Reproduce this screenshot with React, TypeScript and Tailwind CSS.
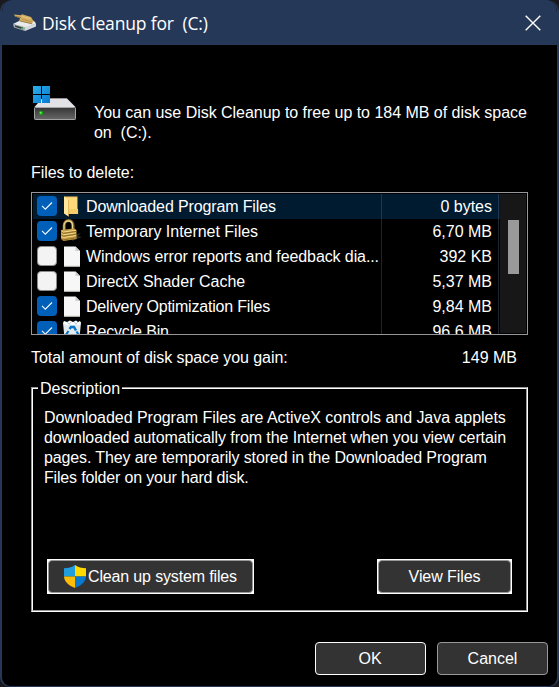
import React from "react";

type Kind = "folder" | "lock" | "page" | "bin";
type Entry = { name: string; size: string; checked: boolean; kind: Kind; tracking: string };

const entries: Entry[] = [
  { name: "Downloaded Program Files", size: "0 bytes", checked: true, kind: "folder", tracking: "tracking-[-0.13px]" },
  { name: "Temporary Internet Files", size: "6,70 MB", checked: true, kind: "lock", tracking: "tracking-[-0.02px]" },
  { name: "Windows error reports and feedback dia...", size: "392 KB", checked: false, kind: "page", tracking: "tracking-[-0.1px]" },
  { name: "DirectX Shader Cache", size: "5,37 MB", checked: false, kind: "page", tracking: "tracking-normal" },
  { name: "Delivery Optimization Files", size: "9,84 MB", checked: true, kind: "page", tracking: "tracking-[-0.2px]" },
  { name: "Recycle Bin", size: "96,6 MB", checked: true, kind: "bin", tracking: "tracking-[-0.15px]" },
];

function CleanupIcon() {
  return (
    <svg width="24" height="20" viewBox="0 0 24 20" className="shrink-0">
      <path d="M0 11 8 7 21 8 23 10.500 12 15z" fill="#e8eaec" />
      <path d="M0 11 12 14v4L1 14.500z" fill="#a9b0b5" />
      <path d="M12 14 23 10.500v3L12 18z" fill="#d5d9dc" />
      <path d="M2 12.300 10 14.500v2L2 14z" fill="#39443f" />
      <path d="M8 14.500h2v1.500H8z" fill="#35ac50" />
      <path d="M1 1.500 8 2.200 9 1.200 18 4 20.500 8 19 11 6 8 7 5 2 3.500z" fill="#d3ae61" />
      <path d="M2 3.300 8 4.500M6.500 7.800 19 10.800" stroke="#92743c" strokeWidth=".8" fill="none" />
      <path d="M9 6l10 3" stroke="#b08d4b" strokeWidth=".7" fill="none" />
      <path d="M9 3.500l8 2" stroke="#e6c981" strokeWidth="1" />
    </svg>
  );
}

function DriveIcon() {
  return (
    <svg width="44" height="36" viewBox="0 0 44 36" className="shrink-0">
      <defs>
        <linearGradient id="drive" x1="0" y1="0" x2="0" y2="1">
          <stop stopColor="#353535" />
          <stop offset="1" stopColor="#686868" />
        </linearGradient>
        <linearGradient id="tiles" x1="0" y1="0" x2="1" y2="1">
          <stop stopColor="#2bb0ea" />
          <stop offset="1" stopColor="#0878d2" />
        </linearGradient>
      </defs>
      <path d="M9 12.500h25L42.500 21H1.500z" fill="#e2e1e6" />
      <path d="M9 12.500h25" stroke="#96969a" />
      <rect x="1.500" y="21.500" width="41" height="12" rx=".7" fill="url(#drive)" stroke="#a5a5a5" />
      <circle cx="8" cy="27" r="2.200" fill="#13a414" />
      <circle cx="7.700" cy="26.700" r="1" fill="#5cff4a" />
      <path d="M0 0h8v8H0zM9 0h8v8H9zM0 9h8v8H0zM9 9h8v8H9z" fill="url(#tiles)" />
    </svg>
  );
}

function EntryIcon({ kind }: { kind: Kind }) {
  if (kind === "folder")
    return (
      <svg width="24" height="25" viewBox="0 0 24 25">
        <path d="M4 2.500h13.500v12l.6 1v4.500H5z" fill="#f4cc69" />
        <path d="M7 4h10v11H7z" fill="#fcd978" />
        <path d="M4 2.500 8.500 5.500v17L4 19.500z" fill="#ffe79d" />
        <path d="M8.500 5.500v17" stroke="#d8aa49" strokeWidth=".7" />
      </svg>
    );
  if (kind === "lock")
    return (
      <svg width="24" height="25" viewBox="0 0 24 25">
        <path d="M13 16 21 14 18 17 22 18 12 22z" fill="#292929" />
        <path d="M4.200 12V6.500C4.200-.2 13-.2 13 6.500V12" fill="none" stroke="#856a2b" strokeWidth="3" />
        <path d="M4 11V6.500C4 .5 12.500.5 12.500 6.500V11" fill="none" stroke="#ead68f" strokeWidth="1.300" />
        <path d="M1 11 14 9.500 16.500 11V20L3.500 22 1 20z" fill="#c79d43" />
        <path d="M1.500 11.700 3.500 13 16 11.300M1.500 14.500l2 1.300 12.500-2M1.500 17.500l2 1 12.500-2" fill="none" stroke="#f0d88d" strokeWidth="1" />
        <path d="m1.500 13.200 2 1.200 12.500-2m-14.500 3.600 2 1.200 12.500-2m-14.500 4.500 2 1.200 12.500-2" fill="none" stroke="#80621f" strokeWidth=".8" />
      </svg>
    );
  if (kind === "page")
    return (
      <svg width="24" height="25" viewBox="0 0 24 25">
        <path d="M4 2.500h11.500L20 7v15.500H4z" fill="#f7f7f7" />
        <path d="M15.500 2.500V7H20z" fill="#d0d0d0" />
        <path d="M4 22h16" stroke="#deded9" />
      </svg>
    );
  return (
    <svg width="24" height="25" viewBox="0 0 24 25">
      <path d="m3 4 18-.5-2 20H5z" fill="#e3eaed" />
      <path d="m3 4 1-2 3 1 3-1.500L13 3l3-1.500L18 3l2-1 1 2-2 2-3-1-3 1-3-1-3 1z" fill="#f9ffff" />
      <path d="m7 3 2 2 2-2m3 0 2 2 2-2" fill="none" stroke="#a5b2b8" strokeWidth=".7" />
      <path d="m9.500 10 1.500-2h3l2 3.500" fill="none" stroke="#0875c8" strokeWidth="2.500" />
      <path d="m8.500 12-2 3 2 3.500m8-6 2 3-2 3" fill="none" stroke="#0875c8" strokeWidth="2.200" />
    </svg>
  );
}

function CheckBox({ checked }: { checked: boolean }) {
  return checked ? (
    <span className="-mt-px flex size-5 shrink-0 items-center justify-center rounded bg-[#005fb8]">
      <svg width="12" height="10" viewBox="0 0 12 10">
        <path d="m1 4.800 3.300 3.400L11 1.500" fill="none" stroke="#f4faff" strokeWidth="1.100" />
      </svg>
    </span>
  ) : (
    <span className="-mt-px size-5 shrink-0 rounded border border-[#8b8b8b] bg-[#f3f3f3]" />
  );
}

function ShieldIcon() {
  return (
    <svg width="22" height="23" viewBox="0 0 22 23" className="shrink-0">
      <defs>
        <clipPath id="shield">
          <path d="M11 0C8 2.500 4 3 0 3.300V11c0 6 5 9.500 11 12 6-2.500 11-6 11-12V3.300C18 3 14 2.500 11 0z" />
        </clipPath>
      </defs>
      <g clipPath="url(#shield)">
        <path d="M0 0h11v11.500H0z" fill="#229edf" />
        <path d="M11 0h11v11.500H11z" fill="#ffda00" />
        <path d="M0 11.500h11V23H0z" fill="#ffbd08" />
        <path d="M11 11.500h11V23H11z" fill="#087bd0" />
      </g>
    </svg>
  );
}

export default function App() {
  return (
    <div className="h-[687px] w-[559px] overflow-hidden bg-[#1a191d]">
      <main className="flex h-full flex-col overflow-hidden rounded-t-[12px] rounded-b-[10px] border-x-2 border-b border-[#253857] bg-black font-['Liberation_Sans',Arial,sans-serif] text-base leading-5 text-white">
        <header className="flex h-[45px] shrink-0 items-center bg-[#253857] pl-[11px] pr-[16px]">
          <CleanupIcon />
          <h1 className="ml-[5px] whitespace-pre font-['Open_Sans',sans-serif] text-[17.5px] leading-6 tracking-[-0.17px]">Disk Cleanup for  (C:)</h1>
          <button aria-label="Close" className="ml-auto size-4">
            <svg width="16" height="16" viewBox="0 0 16 16"><path d="m.7.7 14.600 14.600m0-14.600L.7 15.300" stroke="white" strokeWidth="1.400" /></svg>
          </button>
        </header>

        <section className="flex h-[118px] shrink-0 pl-[31px] pt-[41px]">
          <DriveIcon />
          <p className="ml-[17px] whitespace-pre pt-[17px] tracking-[-0.025px]">You can use Disk Cleanup to free up to 184 MB of disk space{"\n"}on  (C:).</p>
        </section>

        <p className="h-[29px] shrink-0 pl-[29px] tracking-[-0.06px]">Files to delete:</p>

        <div className="ml-[29px] flex h-[143px] w-[497px] shrink-0 overflow-hidden border border-[#96969b] p-px">
          <div className="w-[467px] shrink-0">
            {entries.map((entry, i) => (
              <div key={entry.name} className={`flex h-[25px] items-center ${i === 0 ? "bg-[#001a30]" : ""}`}>
                <div className={`flex h-full w-[349px] shrink-0 items-center border-r pl-1 ${i === 0 ? "border-[#1b3854]" : "border-[#1b2633]"}`}>
                  <CheckBox checked={entry.checked} />
                  <span className="ml-[3px] w-6 shrink-0"><EntryIcon kind={entry.kind} /></span>
                  <span className={`ml-[2px] whitespace-nowrap ${entry.tracking}`}>{entry.name}</span>
                </div>
                <div className={`flex h-full w-[117px] shrink-0 items-center justify-end border-r pr-[6px] ${i === 0 ? "border-[#1b3854]" : "border-[#1b2633]"}`}>{entry.size}</div>
              </div>
            ))}
          </div>
          <div className="w-[26px] bg-[#171717] pl-2 pt-[26px]">
            <div className="h-[54px] w-[11px] bg-[#999999]" />
          </div>
        </div>

        <div className="flex h-[52px] shrink-0 justify-between pl-[29px] pr-[40px] pt-[13px]">
          <span className="tracking-[-0.06px]">Total amount of disk space you gain:</span><span>149 MB</span>
        </div>

        <div className="ml-[29px] h-[225px] w-[497px] shrink-0 border border-t-[#999] border-l-[#999] border-r-white border-b-white">
          <div className="flex h-full flex-col border border-t-white border-l-white border-r-[#999] border-b-[#999] px-[11px]">
            <h2 className="-ml-[6px] -mt-[11px] h-[22px] w-[84px] bg-black pl-[2px] pt-px">Description</h2>
            <p className="mt-[8px] whitespace-pre">
              <span className="tracking-[-0.04px]">Downloaded Program Files are ActiveX controls and Java applets</span>{"\n"}
              <span className="tracking-[-0.09px]">downloaded automatically from the Internet when you view certain</span>{"\n"}
              <span className="tracking-[-0.13px]">pages. They are temporarily stored in the Downloaded Program</span>{"\n"}
              <span className="tracking-[-0.17px]">Files folder on your hard disk.</span>
            </p>
            <div className="mt-[71px] flex justify-between pl-[3px] pr-[3px]">
              <button className="h-[35px] w-[207px] border border-white bg-white">
                <span className="flex h-full w-full items-center rounded-[4px] border border-[#999] bg-[#333] pl-[15px]"><ShieldIcon /><span className="ml-[2px] whitespace-nowrap tracking-[-0.15px]">Clean up system files</span></span>
              </button>
              <button className="h-[35px] w-[135px] border border-white bg-white">
                <span className="flex h-full w-full items-center justify-center rounded-[4px] border border-[#999] bg-[#333] tracking-[-0.08px]">View Files</span>
              </button>
            </div>
          </div>
        </div>

        <footer className="mt-[30px] flex shrink-0 justify-end gap-[11px] pr-[9px]">
          <button className="h-[33px] w-[111px] rounded-[4px] border border-white bg-[#333] pr-px">OK</button>
          <button className="h-[33px] w-[111px] rounded-[4px] border border-[#999] bg-[#333]">Cancel</button>
        </footer>
      </main>
    </div>
  );
}
